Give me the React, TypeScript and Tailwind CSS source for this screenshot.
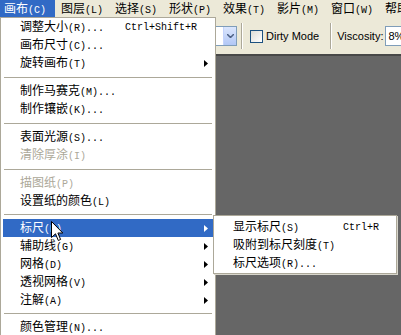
import React from "react";

type Item =
  | "sep9"
  | "sep10"
  | { label: string; key: string; sc?: string; sub?: boolean; disabled?: boolean; active?: boolean };

const items: Item[] = [
  { label: "调整大小", key: "(R)...", sc: "Ctrl+Shift+R" },
  { label: "画布尺寸", key: "(C)..." },
  { label: "旋转画布", key: "(T)", sub: true },
  "sep10",
  { label: "制作马赛克", key: "(M)..." },
  { label: "制作镶嵌", key: "(K)..." },
  "sep10",
  { label: "表面光源", key: "(S)..." },
  { label: "清除厚涂", key: "(I)", disabled: true },
  "sep10",
  { label: "描图纸", key: "(P)", disabled: true },
  { label: "设置纸的颜色", key: "(L)" },
  "sep9",
  { label: "标尺", key: "(N)", sub: true, active: true },
  { label: "辅助线", key: "(G)", sub: true },
  { label: "网格", key: "(D)", sub: true },
  { label: "透视网格", key: "(V)", sub: true },
  { label: "注解", key: "(A)", sub: true },
  "sep9",
  { label: "颜色管理", key: "(N)..." },
];

const menuBar = [
  ["画布", "(C)"],
  ["图层", "(L)"],
  ["选择", "(S)"],
  ["形状", "(P)"],
  ["效果", "(T)"],
  ["影片", "(M)"],
  ["窗口", "(W)"],
  ["帮助", "(H)"],
];

const cjk = "font-['Noto_Sans_CJK_SC',sans-serif] text-[12px] leading-[17px]";
const mono = "font-['Liberation_Mono',monospace] text-[10px] leading-[17px]";

function Label({ a, b }: { a: string; b: string }) {
  return (
    <span className="flex items-baseline whitespace-nowrap">
      <span className={cjk}>{a}</span>
      <span className={mono}>{b}</span>
    </span>
  );
}

function Arrow({ white }: { white?: boolean }) {
  return (
    <svg width="4" height="7" viewBox="0 0 4 7" className="block">
      <path d="M0 0 L4 3.5 L0 7 Z" fill={white ? "#ffffff" : "#000000"} />
    </svg>
  );
}

export default function App() {
  return (
    <div className="relative w-[401px] h-[335px] overflow-hidden bg-[#666666] select-none">
      {/* menu bar */}
      <div className="flex h-[18px] bg-[#ece9d8] text-black overflow-hidden">
        {menuBar.map(([a, b], i) => (
          <div
            key={i}
            className={
              i === 0
                ? "w-[55px] mr-[2px] h-[17px] pl-[4px] bg-[#316ac5] text-white flex items-center shrink-0"
                : "w-[54px] h-[17px] pl-[4px] flex items-center shrink-0"
            }
          >
            <Label a={a} b={b} />
          </div>
        ))}
      </div>

      {/* toolbar */}
      <div className="flex items-center h-[38px] bg-[#ece9d8] border-b-[2px] border-[#484848] overflow-hidden">
        <div className="ml-[160px] shrink-0 flex h-[20px] w-[77px] border border-[#7f9db9] bg-white">
          <div className="flex-1" />
          <div className="w-[13px] h-full bg-gradient-to-b from-[#dbe6fd] to-[#b2c7f5] border-l border-[#c3d3fd] flex items-center justify-center">
            <svg width="7" height="4" viewBox="0 0 7 4">
              <path d="M0 0 L3.5 3.5 L7 0" stroke="#4d6185" strokeWidth="1.5" fill="none" />
            </svg>
          </div>
        </div>
        <div className="ml-[4px] shrink-0 h-[26px] w-[2px] border-l border-[#aca899] bg-white" />
        <div className="ml-[7px] shrink-0 w-[13px] h-[13px] border border-[#1c5180] bg-gradient-to-br from-[#dcdcd6] to-white" />
        <span className="ml-[3px] shrink-0 whitespace-nowrap font-['Liberation_Sans',sans-serif] text-[11px] text-black leading-none">
          Dirty Mode
        </span>
        <div className="ml-[11px] shrink-0 h-[26px] w-[2px] border-l border-[#aca899] bg-white" />
        <span className="ml-[5px] shrink-0 whitespace-nowrap font-['Liberation_Sans',sans-serif] text-[11px] text-black leading-none">
          Viscosity:
        </span>
        <div className="ml-[2px] shrink-0 h-[20px] w-[40px] border border-[#7f9db9] bg-white flex items-center pl-[2px] font-['Liberation_Sans',sans-serif] text-[11px]">
          8%
        </div>
      </div>

      {/* dropdown menu */}
      <div className="absolute left-0 top-[17px] w-[216px] bg-white border border-[#aca899] px-[2px] text-black">
        {items.map((it, i) => {
          if (it === "sep9" || it === "sep10") {
            return (
              <div
                key={i}
                className={(it === "sep9" ? "h-[9px]" : "h-[10px]") + " flex items-center px-[1px]"}
              >
                <div className="h-[1px] w-full bg-[#aca899]" />
              </div>
            );
          }
          return (
            <div
              key={i}
              className={
                "relative flex items-center h-[18px] pl-[17px] pr-[5px] " +
                (it.active ? "bg-[#316ac5] text-white" : it.disabled ? "text-[#aca899]" : "text-black")
              }
            >
              <Label a={it.label} b={it.key} />
              {it.sc && <span className={"absolute left-[122px] " + mono}>{it.sc}</span>}
              {it.sub && (
                <span className="ml-auto">
                  <Arrow white={it.active} />
                </span>
              )}
            </div>
          );
        })}
      </div>

      {/* submenu */}
      <div className="absolute left-[213px] top-[215px] w-[184px] bg-white border border-[#aca899] pt-[2px] pb-[1px] text-black shadow-[1px_1px_0_#d8d6cc]">
        {[
          ["显示标尺", "(S)", "Ctrl+R"],
          ["吸附到标尺刻度", "(T)", ""],
          ["标尺选项", "(R)...", ""],
        ].map(([a, b, sc], i) => (
          <div key={i} className="relative flex items-center h-[18px] pl-[19px]">
            <Label a={a} b={b} />
            {sc && <span className={"absolute left-[129px] " + mono}>{sc}</span>}
          </div>
        ))}
      </div>

      {/* mouse cursor */}
      <svg className="absolute left-[51px] top-[221px]" width="13" height="21" viewBox="0 0 13 21">
        <path
          d="M0.5 0.5 L0.5 16.5 L4.5 12.8 L7.3 19.5 L9.6 18.5 L6.9 12 L11.8 12 Z"
          fill="#ffffff"
          stroke="#000000"
          strokeWidth="1"
        />
      </svg>
    </div>
  );
}
